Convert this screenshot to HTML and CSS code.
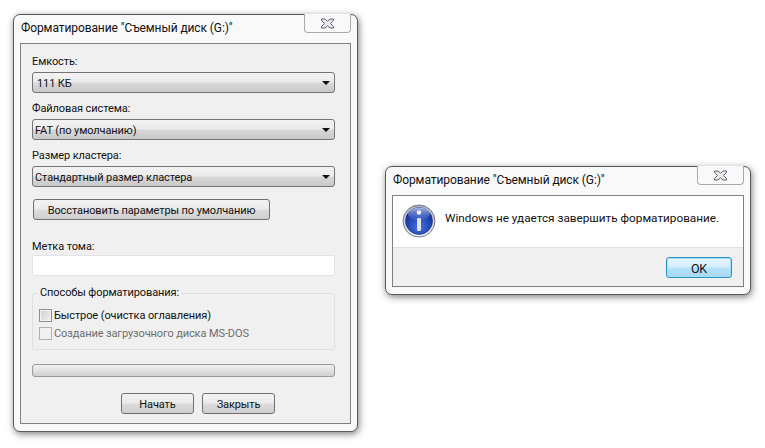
FILE: index.html
```html
<!DOCTYPE html>
<html lang="ru">
<head>
<meta charset="utf-8">
<title>Форматирование</title>
<link rel="stylesheet" href="styles.css">
</head>
<body>
<section class="window format-window">
  <header class="titlebar">
    <span class="title">Форматирование "Съемный диск (G:)"</span>
    <span class="close"><svg width="17" height="11" viewBox="0 0 17 11"><path d="M2.5 1H6L8.5 3.2 11 1h3.5v1.4L11.6 5.500l2.900 3.100V10H11L8.500 7.800 6 10H2.500V8.600L5.400 5.500 2.500 2.400z" fill="#e6e8ee" stroke="#5c6270"/></svg></span>
  </header>
  <div class="panel format-panel">
    <label class="label">Емкость:</label>
    <div class="combo"><span class="combo-text first">111 КБ</span><i class="arrow"></i></div>
    <label class="label next">Файловая система:</label>
    <div class="combo"><span class="combo-text">FAT (по умолчанию)</span><i class="arrow"></i></div>
    <label class="label next">Размер кластера:</label>
    <div class="combo"><span class="combo-text">Стандартный размер кластера</span><i class="arrow"></i></div>
    <button class="btn restore">Восстановить параметры по умолчанию</button>
    <label class="label volume">Метка тома:</label>
    <div class="input"></div>
    <fieldset class="group">
      <legend class="legend">Способы форматирования:</legend>
      <div class="check-row"><i class="check"></i><span>Быстрое (очистка оглавления)</span></div>
      <div class="check-row disabled"><i class="check"></i><span>Создание загрузочного диска MS-DOS</span></div>
    </fieldset>
    <div class="progress"></div>
    <div class="actions">
      <button class="btn action">Начать</button>
      <button class="btn action">Закрыть</button>
    </div>
  </div>
</section>

<section class="window message-window">
  <header class="titlebar">
    <span class="title">Форматирование "Съемный диск (G:)"</span>
    <span class="close"><svg width="17" height="11" viewBox="0 0 17 11"><path d="M2.5 1H6L8.5 3.2 11 1h3.5v1.4L11.6 5.500l2.900 3.100V10H11L8.500 7.800 6 10H2.500V8.600L5.400 5.500 2.500 2.400z" fill="#e6e8ee" stroke="#5c6270"/></svg></span>
  </header>
  <div class="panel message-panel">
    <div class="message-body">
      <svg class="info" width="34" height="34" viewBox="0 0 34 34">
        <defs>
          <radialGradient id="disc" cx="50%" cy="70%" r="65%">
            <stop offset="0" stop-color="#4a72dc"/>
            <stop offset="0.6" stop-color="#2348b8"/>
            <stop offset="1" stop-color="#152a88"/>
          </radialGradient>
          <linearGradient id="ring" x1="0" y1="0" x2="0" y2="1">
            <stop offset="0" stop-color="#aab1c0"/>
            <stop offset="1" stop-color="#f2f3f7"/>
          </linearGradient>
          <linearGradient id="gloss" x1="0" y1="0" x2="0" y2="1">
            <stop offset="0" stop-color="#c3d1f5" stop-opacity=".85"/>
            <stop offset="1" stop-color="#6f8fe4" stop-opacity=".1"/>
          </linearGradient>
        </defs>
        <circle cx="17" cy="17" r="16" fill="url(#ring)" stroke="#6f7888" stroke-width="1"/>
        <circle cx="17" cy="17" r="13.500" fill="url(#disc)" stroke="#1a2a70" stroke-width=".6"/>
        <ellipse cx="17" cy="10" rx="11" ry="6.500" fill="url(#gloss)"/>
        <circle cx="17" cy="8.500" r="2.200" fill="#f2f3f6"/>
        <rect x="15" y="14" width="4" height="13" rx="1.200" fill="#dfe2e8"/>
      </svg>
      <p class="message">Windows не удается завершить форматирование.</p>
    </div>
    <div class="message-foot">
      <button class="btn ok">OK</button>
    </div>
  </div>
</section>
</body>
</html>
```

FILE: styles.css
```css
* { box-sizing: border-box; }
html, body { margin: 0; height: 100%; background: #fff; }
body {
  position: relative;
  width: 765px;
  height: 448px;
  overflow: hidden;
  font-family: Roboto, sans-serif;
  font-size: 11px;
  letter-spacing: -0.1px;
  color: #111;
}
.window {
  position: absolute;
  display: flex;
  flex-direction: column;
  background: #f9f9f9;
  border: 1px solid #5a5a5a;
  border-radius: 7px;
  padding: 0 6px 7px;
  box-shadow: 1px 2px 7px rgba(0, 0, 0, .5);
}
.format-window { left: 13px; top: 14px; width: 345px; height: 418px; }
.message-window { left: 385px; top: 166px; width: 366px; height: 129px; }
.titlebar { display: flex; height: 28px; flex: none; justify-content: space-between; }
.title { padding: 6px 0 0 1px; font-size: 12px; letter-spacing: -0.09px; color: #111; white-space: nowrap; }
.close {
  display: flex;
  align-items: center;
  justify-content: center;
  width: 47px;
  height: 19px;
  margin-top: -1px;
  background: #f9f9f9;
  border: 1px solid #a9a9a9;
  border-top: 0;
  border-radius: 0 0 4px 4px;
}
.panel { flex: 1; background: #f0f0f0; border: 1px solid #808080; }
.format-panel { display: flex; flex-direction: column; padding: 10px 15px 0 11px; }
.label { display: block; height: 17px; line-height: 15px; }
.next { margin-top: 8px; line-height: 16px; }
.combo {
  display: flex;
  align-items: center;
  justify-content: space-between;
  height: 21px;
  margin-top: 1px;
  padding: 1px 4px 0 2px;
  border: 1px solid #747474;
  border-radius: 3px;
  background: linear-gradient(#f3f3f3 0, #ebebeb 48%, #d8d8d8 52%, #c9c9c9 100%);
}
.combo-text { white-space: nowrap; }
.combo-text.first { padding-left: 2px; }
.arrow { width: 0; height: 0; margin-top: -1px; border: 4px solid transparent; border-top: 4px solid #111; border-bottom: 0; }
.btn {
  font: inherit;
  letter-spacing: inherit;
  color: #111;
  padding: 2px 0 0;
  height: 21px;
  border: 1px solid #707070;
  border-radius: 3px;
  background: linear-gradient(#f3f3f3 0, #ebebeb 48%, #dcdcdc 52%, #cfcfcf 100%);
}
.restore { width: 237px; margin: 12px 0 0 1px; flex: none; }
.volume { margin-top: 18px; line-height: 17px; }
.input { height: 21px; background: #fff; border: 1px solid #e2e3ea; border-radius: 2px; }
.group {
  height: 64px;
  margin: 10px 0 0;
  padding: 6px 0 0 6px;
  border: 1px solid #dcdfe6;
  border-radius: 3px;
}
.legend { padding: 0 2px; margin-left: -1px; line-height: 14px; }
.check-row { display: flex; align-items: center; height: 18px; gap: 2px; white-space: nowrap; }
.check {
  width: 13px;
  height: 13px;
  border: 1px solid #8e8f8f;
  background: linear-gradient(135deg, #cfd0d2, #f1f1f2);
  box-shadow: inset 0 0 0 1px #f4f4f4;
}
.disabled { color: #6d6d6d; }
.disabled .check { background: #f0f0f0; border-color: #b1b1b1; box-shadow: none; }
.progress {
  height: 13px;
  margin-top: 14px;
  border: 1px solid #9a9a9a;
  border-radius: 3px;
  background: linear-gradient(#f2f2f2 0, #e4e4e4 40%, #cfcfcf 100%);
}
.actions { display: flex; gap: 8px; margin: 16px 0 0 89px; }
.action { width: 73px; }
.message-panel { display: flex; flex-direction: column; }
.message-body { display: flex; align-items: flex-start; height: 52px; background: #fff; border-bottom: 1px solid #dfdfdf; padding: 8px 0 0 9px; }
.info { flex: none; }
.message { margin: 7px 0 0 9px; white-space: nowrap; font-size: 11.750px; letter-spacing: 0; }
.message-foot { flex: 1; display: flex; justify-content: flex-end; align-items: flex-start; padding: 9px 11px 0 0; }
.ok {
  width: 66px;
  height: 21px;
  font-size: 12.500px;
  border-color: #2d8fc4;
  box-shadow: inset 0 0 0 1px #9fe3fb;
  background: linear-gradient(#e9f6fd 0, #d3eefc 48%, #b5e2f9 52%, #a7d8f4 100%);
}
```
